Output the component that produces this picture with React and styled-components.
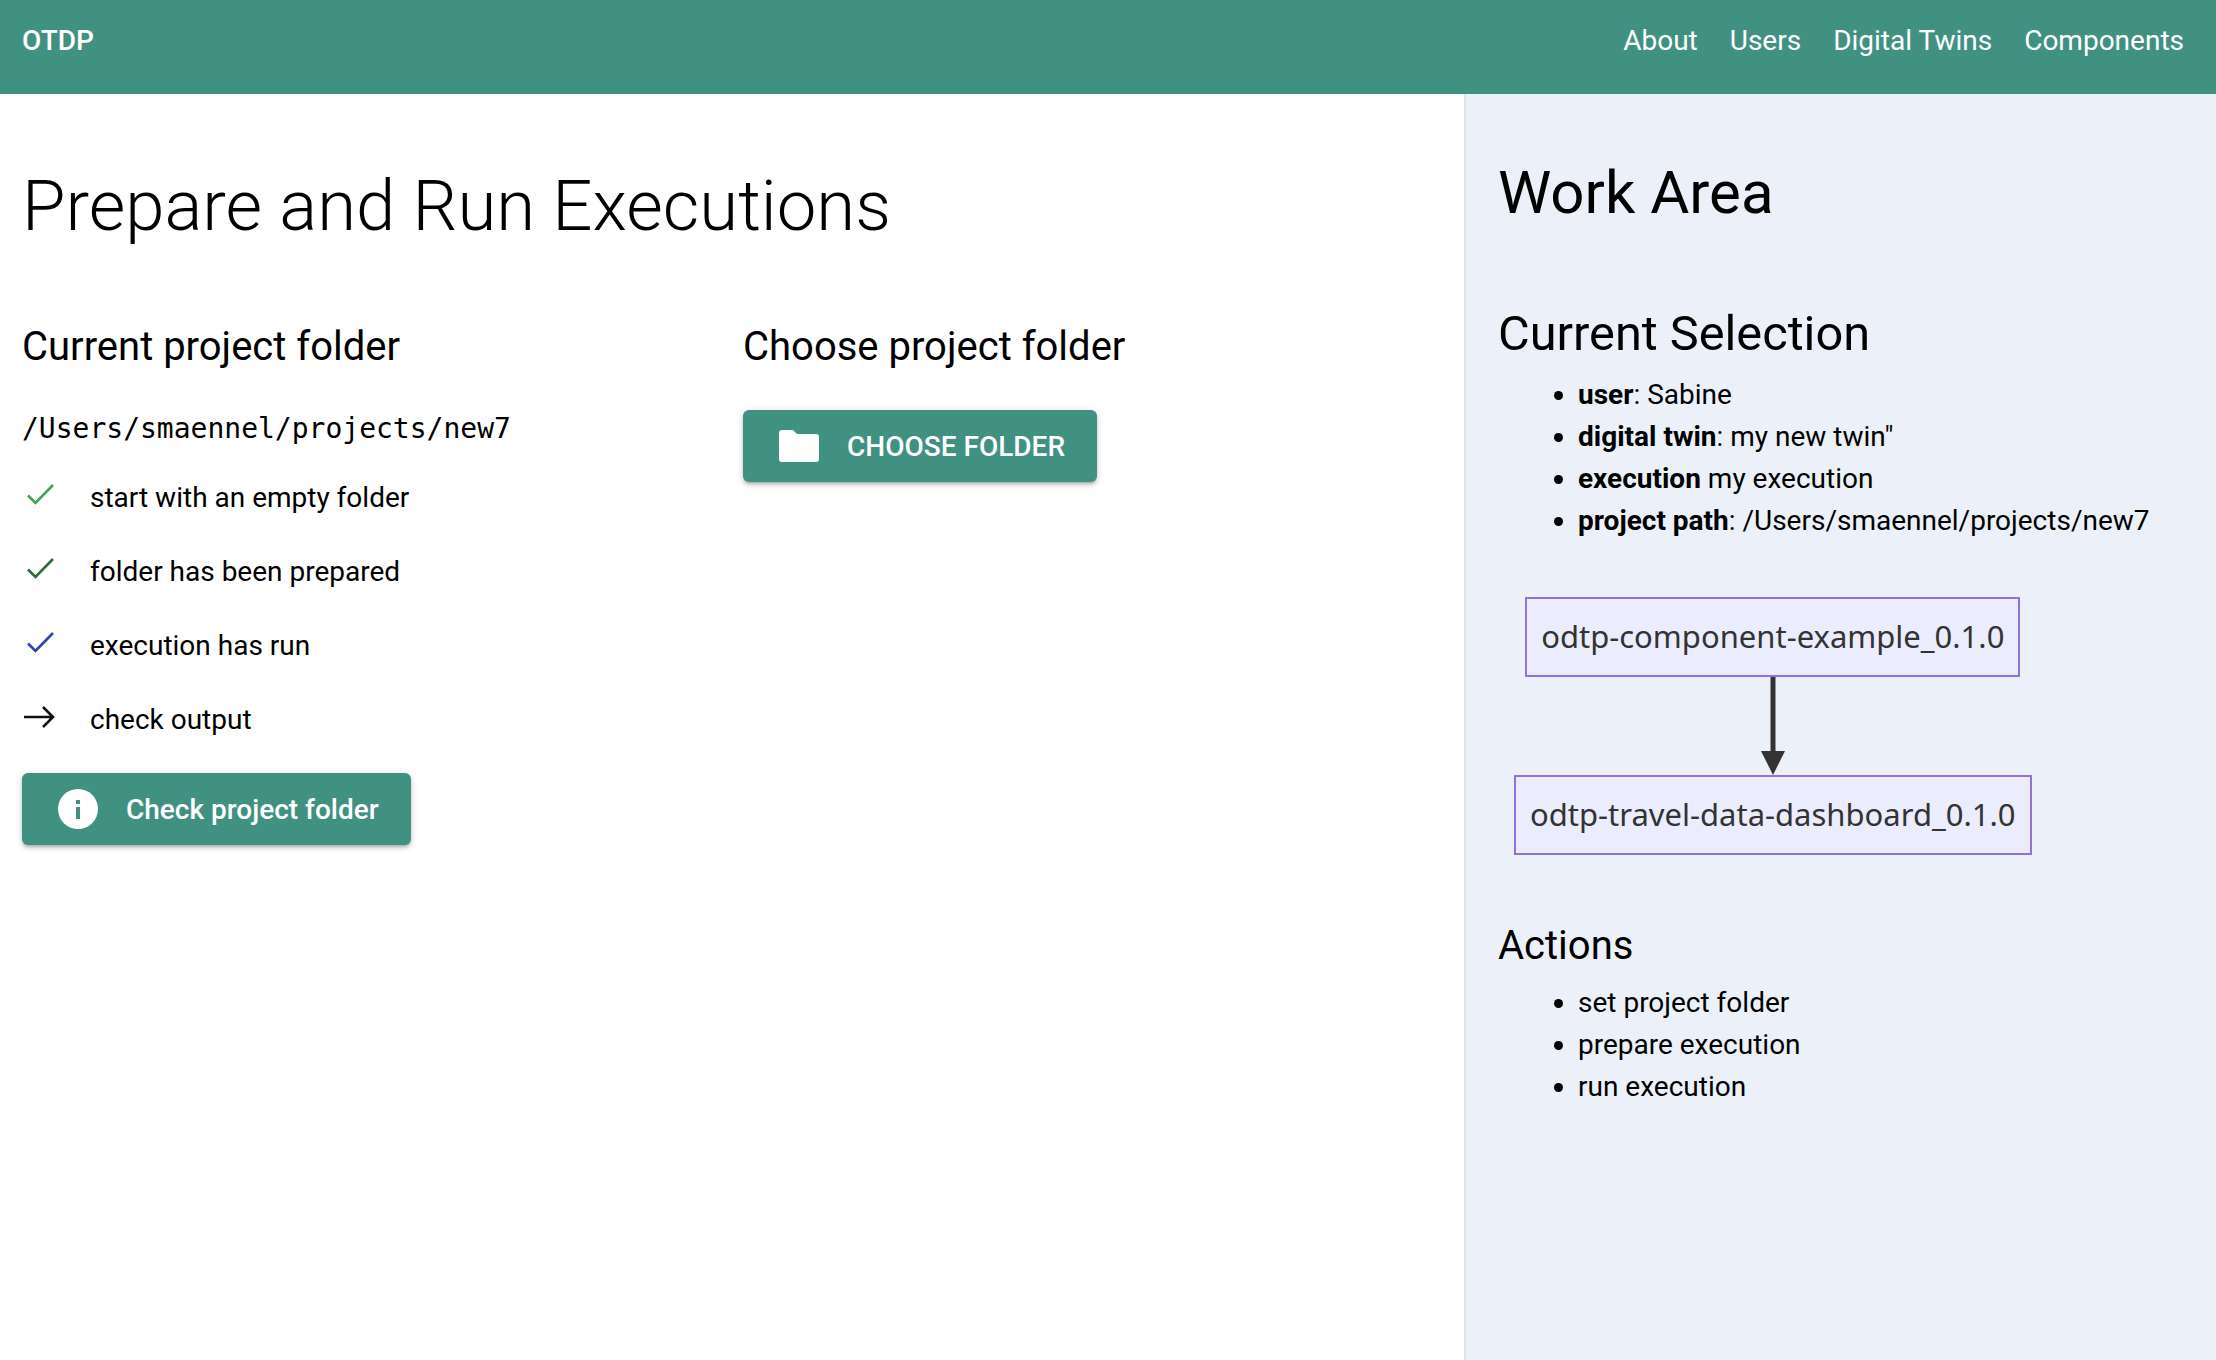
import React from "react";
import styled, { createGlobalStyle } from "styled-components";

const Global = createGlobalStyle`
  html, body { margin: 0; padding: 0; background: #fff; }
  body { font-family: Roboto, "Liberation Sans", sans-serif; color: #000; overflow: hidden; }
  * { box-sizing: border-box; }
`;

const Page = styled.div`
  width: 2216px;
  height: 1360px;
  display: flex;
  flex-direction: column;
  overflow: hidden;
`;
const Header = styled.header`
  height: 94px;
  flex: none;
  background: #419183;
  color: #fff;
  display: flex;
  justify-content: space-between;
  padding: 25px 32px 0 22px;
`;
const Brand = styled.div`
  font-size: 28px;
  font-weight: 500;
  line-height: 30px;
  margin-top: 1px;
`;
const Nav = styled.nav`
  display: flex;
  gap: 32px;
  font-size: 28px;
  line-height: 32px;
`;
const Body = styled.div`
  flex: 1;
  display: flex;
  min-height: 0;
`;
const Main = styled.main`
  width: 1464px;
  flex: none;
  padding: 72px 22px 0;
`;
const Title = styled.h1`
  margin: 0 0 79px;
  font-size: 70.7px;
  font-weight: 300;
  line-height: 80px;
`;
const Columns = styled.div`
  display: grid;
  grid-template-columns: 721px 1fr;
`;
const Column = styled.section``;
const Heading = styled.h2`
  margin: 0 0 ${(p) => p.$gap}px;
  font-size: 40px;
  font-weight: 400;
  line-height: 44px;
`;
const Path = styled.div`
  font-family: "DejaVu Sans Mono", monospace;
  font-size: 28px;
  line-height: 36px;
  margin-bottom: 13px;
`;
const CheckList = styled.ul`
  list-style: none;
  margin: 0 0 17px;
  padding: 0;
`;
const CheckItem = styled.li`
  height: 74px;
  display: flex;
  align-items: center;
  font-size: 28px;
`;
const IconSlot = styled.span`
  width: 68px;
  flex: none;
  display: flex;
  align-items: center;
  margin-top: -4px;
`;
const Button = styled.button`
  height: 72px;
  display: inline-flex;
  align-items: center;
  border: 0;
  border-radius: 6px;
  background: #419183;
  color: #fff;
  font-family: inherit;
  font-weight: 500;
  font-size: 28px;
  padding: 0 32px 0 36px;
  gap: 28px;
  box-shadow: 0 3px 3px -2px rgba(0,0,0,.2), 0 3px 4px rgba(0,0,0,.14), 0 1px 8px rgba(0,0,0,.12);
`;
const Aside = styled.aside`
  flex: 1;
  background: #ecf1f9;
  border-left: 2px solid #dfe2ea;
  padding: 63px 32px 0 32px;
`;
const SideTitle = styled.h2`
  margin: 0 0 77px;
  font-size: 60px;
  font-weight: 400;
  line-height: 72px;
`;
const SideHeading = styled.h3`
  margin: 0 0 12px;
  font-size: 48.7px;
  font-weight: 400;
  line-height: 56px;
`;
const SideSub = styled.h4`
  margin: 0 0 12px;
  font-size: 40px;
  font-weight: 400;
  line-height: 48px;
`;
const Bullets = styled.ul`
  margin: 0;
  padding: 0 0 0 80px;
  font-size: 28px;
  line-height: 42px;
`;
const Diagram = styled.div`
  margin: 55px 0 67px 16px;
  display: flex;
  flex-direction: column;
  align-items: center;
  width: fit-content;
`;
const Node = styled.div`
  height: 80px;
  display: flex;
  align-items: center;
  justify-content: center;
  padding: 0 14px 2px;
  border: 2px solid #9370db;
  background: #ececff;
  color: #333;
  font-family: "Noto Sans", sans-serif;
  font-size: 31px;
  white-space: nowrap;
`;
const Edge = styled.svg`
  display: block;
  width: 24px;
  height: 98px;
`;

const Check = ({ color }) => (
  <svg width="34" height="24" viewBox="0 0 34 24" fill="none">
    <path d="M6 12.5 L13.5 20 L31 2" stroke={color} strokeWidth="2.6" />
  </svg>
);
const Arrow = () => (
  <svg width="34" height="24" viewBox="0 0 34 24" fill="none">
    <path d="M2 12 H31 M21 2 L31 12 L21 22" stroke="#111" strokeWidth="2.6" />
  </svg>
);
const InfoIcon = () => (
  <svg width="40" height="40" viewBox="0 0 40 40">
    <circle cx="20" cy="20" r="20" fill="#fff" />
    <rect x="18" y="18" width="4" height="12" fill="#419183" />
    <rect x="18" y="11" width="4" height="4" fill="#419183" />
  </svg>
);
const FolderIcon = () => (
  <svg width="40" height="32" viewBox="0 0 40 32">
    <path d="M3 0 H14 L18 4 H37 a3 3 0 0 1 3 3 V29 a3 3 0 0 1 -3 3 H3 a3 3 0 0 1 -3 -3 V3 a3 3 0 0 1 3 -3 Z" fill="#fff" />
  </svg>
);

export default function App() {
  return (
    <Page>
      <Global />
      <Header>
        <Brand>OTDP</Brand>
        <Nav>
          <span>About</span>
          <span>Users</span>
          <span>Digital Twins</span>
          <span>Components</span>
        </Nav>
      </Header>
      <Body>
        <Main>
          <Title>Prepare and Run Executions</Title>
          <Columns>
            <Column>
              <Heading $gap={42}>Current project folder</Heading>
              <Path>/Users/smaennel/projects/new7</Path>
              <CheckList>
                <CheckItem><IconSlot><Check color="#4a9e58" /></IconSlot>start with an empty folder</CheckItem>
                <CheckItem><IconSlot><Check color="#2f6b3a" /></IconSlot>folder has been prepared</CheckItem>
                <CheckItem><IconSlot><Check color="#2a45b0" /></IconSlot>execution has run</CheckItem>
                <CheckItem><IconSlot><Arrow /></IconSlot>check output</CheckItem>
              </CheckList>
              <Button><InfoIcon />Check project folder</Button>
            </Column>
            <Column>
              <Heading $gap={41}>Choose project folder</Heading>
              <Button><FolderIcon />CHOOSE FOLDER</Button>
            </Column>
          </Columns>
        </Main>
        <Aside>
          <SideTitle>Work Area</SideTitle>
          <SideHeading>Current Selection</SideHeading>
          <Bullets>
            <li><b>user</b>: Sabine</li>
            <li><b>digital twin</b>: my new twin"</li>
            <li><b>execution</b> my execution</li>
            <li><b>project path</b>: /Users/smaennel/projects/new7</li>
          </Bullets>
          <Diagram>
            <Node>odtp-component-example_0.1.0</Node>
            <Edge viewBox="0 0 24 98">
              <path d="M12 0 V76" stroke="#333" strokeWidth="5" />
              <path d="M0 74 H24 L12 98 Z" fill="#333" />
            </Edge>
            <Node>odtp-travel-data-dashboard_0.1.0</Node>
          </Diagram>
          <SideSub>Actions</SideSub>
          <Bullets>
            <li>set project folder</li>
            <li>prepare execution</li>
            <li>run execution</li>
          </Bullets>
        </Aside>
      </Body>
    </Page>
  );
}
